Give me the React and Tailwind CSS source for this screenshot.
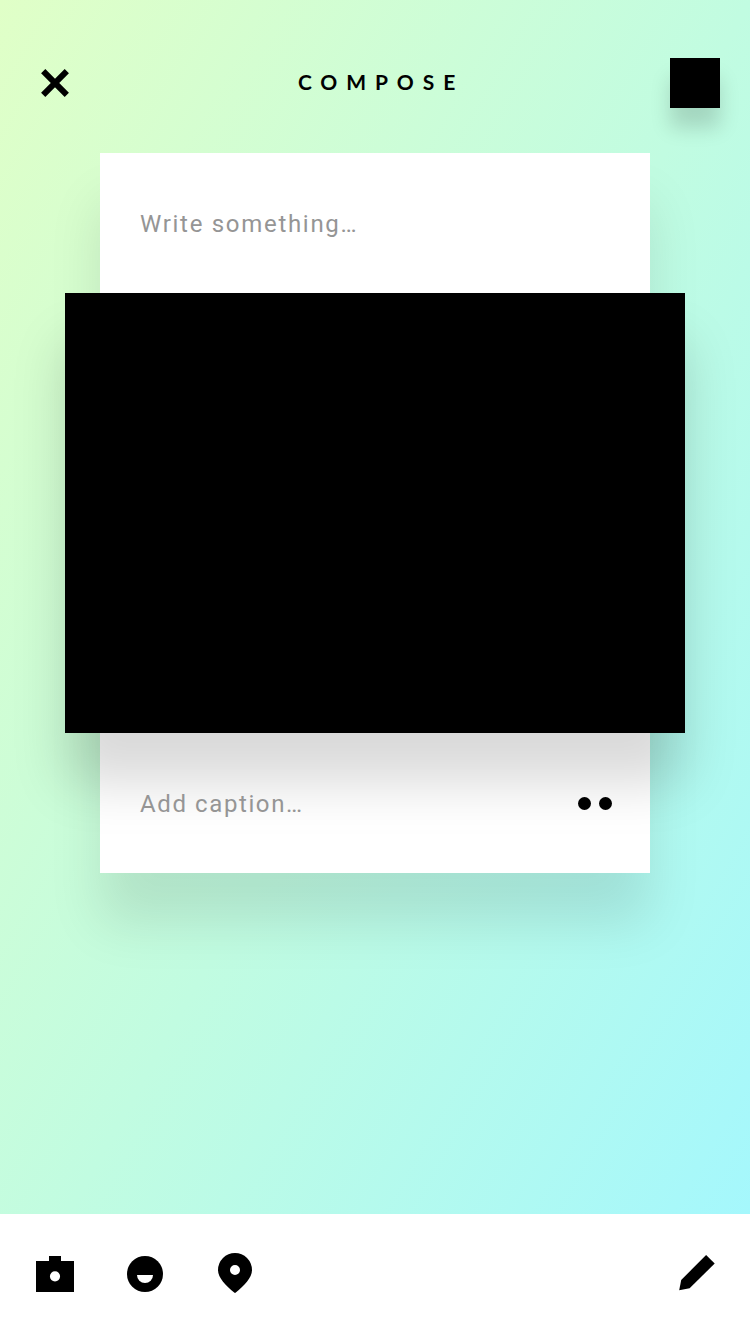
import React from "react";

const fieldText = "font-['Roboto',sans-serif] text-[24px] leading-[28px] text-[#959595]";

function Header() {
  return (
    <header className="flex h-[153px] items-start justify-between pl-10 pr-[30px] pt-[58px]">
      <button aria-label="Close" className="mt-[10px] h-[30px] w-[50px]">
        <svg width="30" height="30" viewBox="0 0 30 30" stroke="#000" strokeWidth="6">
          <path d="M3.2 3.2 26.8 26.8M26.8 3.2 3.2 26.8" />
        </svg>
      </button>
      <h1 className="mt-[10px] ml-[2px] whitespace-nowrap font-['Lato',sans-serif] text-[21px] font-bold leading-7 tracking-[8.9px] text-black">
        COMPOSE
      </h1>
      <div className="h-[50px] w-[50px] bg-black shadow-[0_20px_20px_rgba(0,0,0,0.15)]" />
    </header>
  );
}

function Card() {
  return (
    <section className="mx-[100px] flex h-[720px] flex-col bg-white shadow-[0_50px_50px_rgba(0,0,0,0.1)]">
      <div className="flex h-[140px] items-center px-10 pt-[2px]">
        <p className={`${fieldText} tracking-[1.7px]`}>Write something…</p>
      </div>
      <div className="-mx-[35px] h-[440px] bg-black shadow-[0_50px_50px_rgba(0,0,0,0.15)]" />
      <div className="relative flex h-[140px] items-center justify-between pl-10 pr-[38px]">
        <p className={`${fieldText} pt-[2px] tracking-[1.6px]`}>Add caption…</p>
        <div className="flex gap-2">
          <span className="h-[13px] w-[13px] rounded-full bg-black" />
          <span className="h-[13px] w-[13px] rounded-full bg-black" />
        </div>
      </div>
    </section>
  );
}

function Toolbar() {
  return (
    <footer className="flex h-[120px] items-start justify-between bg-white pl-9 pr-[35px] pt-[39px]">
      <div className="flex items-start">
        <svg className="mt-[3px]" width="38" height="36" viewBox="0 0 38 36">
          <path fillRule="evenodd" d="M13 0h12v5h13v31H0V5h13zM19 15.2a5.1 5.1 0 1 0 0 10.2 5.1 5.1 0 0 0 0-10.2z" />
        </svg>
        <svg className="ml-[53px] mt-[3px]" width="36" height="36" viewBox="0 0 36 36">
          <circle cx="18" cy="18" r="18" />
          <path fill="#fff" d="M10 19h16a8 8 0 0 1-16 0z" />
        </svg>
        <svg className="ml-[55px]" width="34" height="40" viewBox="0 0 34 40">
          <path fillRule="evenodd" d="M17 0A17 17 0 0 0 0 17C0 25 8 32.5 16.2 39.6Q17 40.3 17.8 39.6C26 32.5 34 25 34 17A17 17 0 0 0 17 0zM17 12a5 5 0 1 0 0 10 5 5 0 0 0 0-10z" />
        </svg>
      </div>
      <svg className="mt-[2px]" width="36" height="36" viewBox="0 0 36 36">
        <path d="M27.1 0 35.7 8.5 10.6 33.3 .2 35.2 2.2 25z" />
      </svg>
    </footer>
  );
}

export default function App() {
  return (
    <main className="flex h-[1334px] w-[750px] flex-col overflow-hidden bg-[linear-gradient(to_bottom_right,#e0ffc7_0%,#c1fce1_50%,#a2f7ff_100%)]">
      <div className="h-[1214px]">
        <Header />
        <Card />
      </div>
      <Toolbar />
    </main>
  );
}
